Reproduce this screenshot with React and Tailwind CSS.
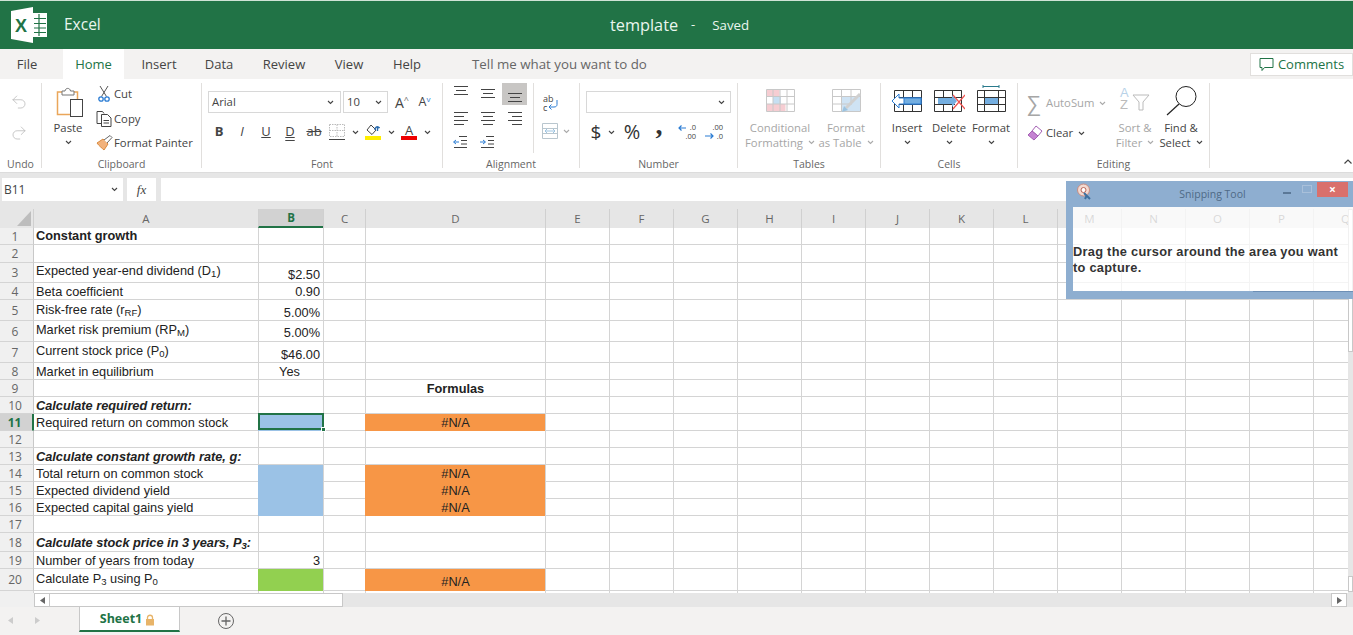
import { Fragment } from "react";
import { Undo2, Redo2 } from "lucide-react";

const Chevron = ({ color = "#444" }) => (
  <svg width="7" height="5" viewBox="0 0 7 5" fill="none" stroke={color} strokeWidth="1.1">
    <path d="M1 1L3.500 3.500L6 1" />
  </svg>
);

const ExcelLogo = () => (
  <svg width="38" height="38" viewBox="0 0 38 38">
    <path d="M1 5L23 1V37L1 33Z" fill="#fff" />
    <path d="M23 7H37V31H23Z" fill="#fff" />
    <path d="M24 12.5H36M24 17.5H36M24 22H36M24 26.5H36M29 8V30" stroke="#217346" strokeWidth="1.2" />
    <text x="5" y="26" fill="#217346" fontSize="18" fontWeight="700" fontFamily="Liberation Sans">X</text>
  </svg>
);

const PasteIcon = () => (
  <svg width="28" height="31" viewBox="0 0 28 31" fill="none">
    <path d="M7 5H1.5V27.5H14" stroke="#eaa65a" strokeWidth="1.5" />
    <path d="M16 5H21.5V12" stroke="#eaa65a" strokeWidth="1.5" />
    <path d="M6 8V4H9C9.5 0.5 14 0.5 14.500 4H18V8Z" fill="#fff" stroke="#777" />
    <rect x="14.500" y="12.500" width="12" height="17" fill="#fff" stroke="#444" />
  </svg>
);

const CutIcon = () => (
  <svg width="12" height="16" viewBox="0 0 12 16" fill="none">
    <path d="M2 0L8.500 10.500M10 0L3.500 10.500" stroke="#555" />
    <circle cx="3" cy="13" r="2.200" stroke="#2b7cd3" strokeWidth="1.300" />
    <circle cx="9" cy="13" r="2.200" stroke="#2b7cd3" strokeWidth="1.300" />
  </svg>
);

const CopyIcon = () => (
  <svg width="16" height="16" viewBox="0 0 16 16" fill="none" stroke="#444">
    <path d="M5.500 12.500H1V0.500H6.500L8 2.500" />
    <path d="M5.500 3.500H11.500L15 7V15.500H5.500Z" fill="#fff" />
    <path d="M7.500 9.500H13M7.500 12H13" />
  </svg>
);

const PainterIcon = () => (
  <svg width="17" height="16" viewBox="0 0 17 16" fill="none">
    <path d="M1 8L7 4L12 9L8 15C6 13 3 11 1 8Z" fill="#f2b27c" stroke="#d98a3e" />
    <path d="M8 5L14 0.500L16 2.500L11 8" fill="#fff" stroke="#666" />
  </svg>
);

const Borders = () => (
  <svg width="16" height="16" viewBox="0 0 16 16" fill="none">
    <path d="M0.500 0.500H15.500V12.500H0.500ZM8 0.500V12.500M0.500 6.500H15.500" stroke="#bbb" strokeDasharray="1.500 1" />
    <path d="M0 15.500H16" stroke="#444" />
  </svg>
);

const FillColor = () => (
  <div className="flex flex-col items-center">
    <svg width="14" height="12" viewBox="0 0 14 12" fill="none">
      <path d="M5 1L1 6L6 10.500L10 6Z" stroke="#444" />
      <path d="M9 6C9 3 11 2 13 3.500L11.500 4V7" stroke="#2b6cb0" strokeWidth="1.400" />
    </svg>
    <div className="w-[16px] h-[4px] bg-[#ffee00]" />
  </div>
);

const FontColor = () => (
  <div className="flex flex-col items-center leading-[13px]">
    <span className="text-[13px] h-[12px] text-[#444]">A</span>
    <div className="w-[16px] h-[4px] bg-[#ee0000]" />
  </div>
);

const AlignLines = ({ lines }) => (
  <svg width="16" height="20" viewBox="0 0 16 20" stroke="#444" strokeWidth="1">
    {lines.map((l, i) => (
      <path key={i} d={`M${l[0]} ${l[2]}.5H${l[1]}`} />
    ))}
  </svg>
);

const Indent = ({ flip }) => (
  <svg width="15" height="14" viewBox="0 0 15 14" fill="none">
    <path d="M6 1.500H14M8 5.500H14M8 9H14M1 12.500H14" stroke="#444" />
    {flip ? (
      <path d="M0 7H5M3 5L5.500 7L3 9" stroke="#2b7cd3" />
    ) : (
      <path d="M6 7H1M3 5L0.500 7L3 9" stroke="#2b7cd3" />
    )}
  </svg>
);

const WrapIcon = () => (
  <div className="relative w-[15px] h-[16px] text-[9px] leading-[9px] text-[#444]">
    <div>ab</div>
    <div>c</div>
    <svg className="absolute left-[4px] top-[6px]" width="11" height="11" viewBox="0 0 11 11" fill="none" stroke="#2b7cd3">
      <path d="M10 0V4.500C10 6 9 7 7 7H2M4.500 4.500L2 7L4.500 9.500" />
    </svg>
  </div>
);

const MergeIcon = () => (
  <svg width="16" height="16" viewBox="0 0 16 16" fill="none" stroke="#b9c6ce">
    <path d="M0.500 0.500H15.500V15.500H0.500ZM0.500 5.500H15.500M0.500 10.500H15.500" />
    <path d="M3 8H13M5 6L3 8L5 10M11 6L13 8L11 10" stroke="#9cc3e0" />
  </svg>
);

const IncDecimal = () => (
  <div className="relative w-[18px] h-[18px] text-[7.500px] leading-[9px] text-[#444]">
    <div className="text-right">.0</div>
    <div className="text-right">.00</div>
    <svg className="absolute left-0 top-0" width="8" height="9" viewBox="0 0 8 9" fill="none" stroke="#2b7cd3" strokeWidth="1.200">
      <path d="M8 5H1M3.500 2.500L1 5L3.500 7.500" />
    </svg>
  </div>
);

const DecDecimal = () => (
  <div className="relative w-[18px] h-[18px] text-[7.500px] leading-[9px] text-[#444]">
    <div className="text-right">.00</div>
    <div className="text-right">.0</div>
    <svg className="absolute left-0 top-[8px]" width="10" height="9" viewBox="0 0 10 9" fill="none" stroke="#2b7cd3" strokeWidth="1.200">
      <path d="M0 5H8M5.500 2.500L8 5L5.500 7.500" />
    </svg>
  </div>
);

const CondFormat = () => (
  <svg width="29" height="23" viewBox="0 0 29 23" fill="none">
    <rect x="0.500" y="0.500" width="13" height="7" fill="#f6cdd2" />
    <rect x="7" y="8" width="8" height="7" fill="#c6dff2" />
    <rect x="0.500" y="15" width="19" height="7" fill="#f6cdd2" />
    <path d="M0.500 0.500H28.500V22.500H0.500ZM0.500 7.500H28.500M0.500 15H28.500M7 0.500V22.500M14 0.500V22.500M21 0.500V22.500" stroke="#c8c8c8" />
  </svg>
);

const TableFormat = () => (
  <svg width="29" height="23" viewBox="0 0 29 23" fill="none">
    <rect x="9" y="8" width="19" height="14" fill="#cfe3f4" />
    <path d="M0.500 0.500H28.500V22.500H0.500ZM0.500 7.500H28.500M0.500 15H20M9.500 0.500V22.500M19 0.500V15" stroke="#c8c8c8" />
    <path d="M28 5L14 19" stroke="#d0d0d0" strokeWidth="3" />
    <path d="M12 17L16 21L10 23Z" fill="#9cc3e0" />
  </svg>
);

const InsertIcon = () => (
  <svg width="31" height="22" viewBox="0 0 31 22" fill="none">
    <path d="M3.500 0.500H30.500V21.500H3.500ZM3.500 7.500H30.500M3.500 14.500H30.500M12.500 0.500V21.500M21.500 0.500V21.500" stroke="#333" />
    <path d="M8 4L1 11L8 18V14H30V8H8Z" fill="#fff" stroke="#2b7cd3" />
    <rect x="13" y="8" width="17" height="6" fill="#74aee0" stroke="#2b7cd3" />
  </svg>
);

const DeleteIcon = () => (
  <svg width="31" height="22" viewBox="0 0 31 22" fill="none">
    <path d="M0.500 0.500H27.500V21.500H0.500ZM0.500 7.500H27.500M0.500 14.500H21M9.500 0.500V21.500M18.500 0.500V21.500M27.500 0.500V6" stroke="#333" />
    <path d="M4 8H18V5L23 11L18 17V14H4Z" fill="#74aee0" />
    <path d="M19 5L31 19M31 5L19 19" stroke="#ef5350" strokeWidth="1.200" />
  </svg>
);

const FormatIcon = () => (
  <svg width="29" height="27" viewBox="0 0 29 27" fill="none">
    <path d="M6 1.500H22M6 0V3M22 0V3" stroke="#2a7a8c" />
    <path d="M0.500 5.500H28.500V26.500H0.500ZM0.500 12.500H28.500M0.500 19.500H28.500M7.500 5.500V26.500M21.500 5.500V26.500" stroke="#333" />
    <rect x="8" y="13" width="13" height="6" fill="#74aee0" />
  </svg>
);

const Eraser = () => (
  <svg width="16" height="16" viewBox="0 0 16 16" fill="none">
    <path d="M9 1L15 6L11 11L5 6Z" fill="#fff" stroke="#a560b4" />
    <path d="M5 6L11 11L7 15L1 10Z" fill="#c583d2" stroke="#a560b4" />
  </svg>
);

const SortIcon = () => (
  <div className="relative w-[30px] h-[25px] text-[13px] leading-[12px] font-['Liberation_Sans',sans-serif]">
    <div className="text-[#b8d2e8]">A</div>
    <div className="text-[#bbb]">Z</div>
    <svg className="absolute left-[12px] top-[7px]" width="18" height="17" viewBox="0 0 18 17" fill="none" stroke="#bbb">
      <path d="M1 1H17L11 8V16H7V8Z" />
    </svg>
  </div>
);

const FindIcon = () => (
  <svg width="31" height="30" viewBox="0 0 31 30" fill="none" stroke="#222">
    <circle cx="20" cy="10.500" r="10" />
    <path d="M13 18L1 29" strokeWidth="1.200" />
  </svg>
);

const Triangle = () => (
  <svg width="14" height="15" viewBox="0 0 14 15">
    <path d="M14 0V15H0Z" fill="#bdbdbd" />
  </svg>
);

const SnipIcon = () => (
  <svg width="18" height="18" viewBox="0 0 18 18" fill="none">
    <circle cx="7.500" cy="7" r="6" fill="#f3d9d0" stroke="#c98c80" />
    <circle cx="7.500" cy="7" r="2.500" fill="#fff" stroke="#b8665a" />
    <path d="M8 10L14 16M11 12L9 16" stroke="#3c6f9f" strokeWidth="2" />
  </svg>
);

const Group = ({ label, width, children }) => (
  <div className={`${width} h-[85px] shrink-0 border-r border-[#e1dfdd]`}>
    <div className="h-[74px] flex">{children}</div>
    <div className="h-[14px] leading-[14px] text-[10.500px] text-center text-[#666]">{label}</div>
  </div>
);

const Big = ({ icon, lines, width, muted, chev, pt = "pb-[8px]" }) => (
  <div className={`${width} flex flex-col items-center shrink-0`}>
    <div className={`h-[37px] flex items-end justify-center ${pt}`}>{icon}</div>
    <div className={`text-[11.300px] leading-[15px] whitespace-nowrap ${muted ? "text-[#a6a6a6]" : "text-[#444]"}`}>{lines[0]}</div>
    {lines[1] ? (
      <div className={`text-[11.300px] leading-[15px] whitespace-nowrap flex items-center gap-[5px] ${muted ? "text-[#a6a6a6]" : "text-[#444]"}`}>
        {lines[1]}
        <Chevron color={muted ? "#aaa" : "#444"} />
      </div>
    ) : (
      chev && <div className="h-[15px] flex items-center"><Chevron /></div>
    )}
  </div>
);

const SmallRow = ({ icon, text, mt }) => (
  <div className={`h-[20px] flex items-center ${mt}`}>
    <div className="w-[20px] flex justify-center">{icon}</div>
    <span className="text-[11.300px] text-[#444] whitespace-nowrap">{text}</span>
  </div>
);

const Ribbon = () => (
  <div className="h-[93px] bg-white pt-[4px] flex">
    <Group label="Undo" width="w-[42px]">
      <div className="w-[38px] pt-[10px] flex flex-col items-center gap-[13px]">
        <Undo2 size={18} strokeWidth={1} color="#b5b5b5" />
        <Redo2 size={18} strokeWidth={1} color="#b5b5b5" />
      </div>
    </Group>

    <Group label="Clipboard" width="w-[160px]">
      <div className="w-[52px] pt-[4px] flex flex-col items-center">
        <div className="ml-[3px]"><PasteIcon /></div>
        <div className="text-[11.300px] leading-[15px] mt-[2px] text-[#444]">Paste</div>
        <div className="h-[15px] flex items-center"><Chevron /></div>
      </div>
      <div className="pt-[1px]">
        <SmallRow icon={<CutIcon />} text="Cut" />
        <SmallRow icon={<CopyIcon />} text="Copy" mt="mt-[5px]" />
        <SmallRow icon={<PainterIcon />} text="Format Painter" mt="mt-[4px]" />
      </div>
    </Group>

    <Group label="Font" width="w-[241px]">
      <div className="pl-[6px] pt-[8px]">
        <div className="flex items-center">
          <div className="w-[133px] h-[22px] border border-[#d8d8d8] flex items-center justify-between px-[3px] pr-[6px] text-[11.300px] text-[#444]">
            Arial <Chevron />
          </div>
          <div className="w-[45px] h-[22px] ml-[2px] border border-[#d8d8d8] flex items-center justify-between px-[3px] pr-[5px] text-[11.300px] text-[#444]">
            10 <Chevron />
          </div>
          <div className="w-[22px] ml-[3px] text-[14px] text-center text-[#444]">A<sup className="text-[9px] text-[#666]">^</sup></div>
          <div className="w-[23px] text-[12.500px] text-center text-[#444]">A<sup className="text-[8px] text-[#2b7cd3]">v</sup></div>
        </div>
        <div className="flex items-center h-[22px] mt-[8px] text-[#444] text-[13px]">
          <div className="w-[22px] text-center font-bold">B</div>
          <div className="w-[24px] text-center italic">I</div>
          <div className="w-[24px] text-center underline">U</div>
          <div className="w-[24px] text-center underline decoration-double">D</div>
          <div className="w-[24px] text-center line-through">ab</div>
          <div className="w-[19px] flex justify-end"><Borders /></div>
          <div className="w-[20px] flex justify-center"><Chevron /></div>
          <div className="w-[16px] flex justify-center"><FillColor /></div>
          <div className="w-[20px] flex justify-center"><Chevron /></div>
          <div className="w-[16px] flex justify-center"><FontColor /></div>
          <div className="w-[20px] flex justify-center"><Chevron /></div>
        </div>
      </div>
    </Group>

    <Group label="Alignment" width="w-[137px]">
      <div className="ml-[4px] grid grid-cols-[27px_27px_27px] grid-rows-[22px_22px_22px] gap-y-[2px] items-center justify-items-center">
        <AlignLines lines={[[1, 15, 2], [3, 13, 6], [1, 15, 10]]} />
        <AlignLines lines={[[1, 15, 5], [3, 13, 9], [1, 15, 13]]} />
        <div className="w-[25px] h-[22px] bg-[#c8c6c4] flex items-center justify-center">
          <AlignLines lines={[[1, 15, 9], [3, 13, 13], [1, 15, 17]]} />
        </div>
        <AlignLines lines={[[1, 15, 4], [1, 11, 8], [1, 15, 12], [1, 11, 16]]} />
        <AlignLines lines={[[1, 15, 4], [3, 13, 8], [1, 15, 12], [3, 13, 16]]} />
        <AlignLines lines={[[1, 15, 4], [5, 15, 8], [1, 15, 12], [5, 15, 16]]} />
        <Indent />
        <Indent flip />
      </div>
      <div className="ml-[5px] h-[70px] border-l border-[#e1dfdd] pl-[9px] pt-[11px]">
        <WrapIcon />
        <div className="flex items-center gap-[5px] mt-[13px] -ml-px">
          <MergeIcon />
          <Chevron color="#aaa" />
        </div>
      </div>
    </Group>

    <Group label="Number" width="w-[158px]">
      <div className="pl-[6px] pt-[8px]">
        <div className="w-[145px] h-[22px] border border-[#d8d8d8] flex items-center justify-end pr-[5px]"><Chevron /></div>
        <div className="flex items-center h-[22px] mt-[8px] text-[#333]">
          <div className="w-[20px] text-center text-[19px]">$</div>
          <div className="w-[10px] flex justify-center"><Chevron /></div>
          <div className="w-[32px] text-center text-[20px]">%</div>
          <div className="w-[22px] text-center text-[28px] font-bold leading-[14px] pb-[14px] font-['Liberation_Serif',serif]">,</div>
          <div className="ml-[8px] w-[18px]"><IncDecimal /></div>
          <div className="ml-[9px] w-[18px]"><DecDecimal /></div>
        </div>
      </div>
    </Group>

    <Group label="Tables" width="w-[143px]">
      <Big icon={<CondFormat />} lines={["Conditional", "Formatting"]} width="w-[84px]" muted />
      <Big icon={<TableFormat />} lines={["Format", "as Table"]} width="w-[48px]" muted />
    </Group>

    <Group label="Cells" width="w-[137px]">
      <div className="w-[5px]" />
      <Big icon={<div className="-ml-[2px]"><InsertIcon /></div>} lines={["Insert"]} width="w-[42px]" chev />
      <Big icon={<DeleteIcon />} lines={["Delete"]} width="w-[42px]" chev />
      <Big icon={<FormatIcon />} lines={["Format"]} width="w-[42px]" chev />
    </Group>

    <Group label="Editing" width="w-[192px]">
      <div className="w-[100px] pl-[9px] shrink-0">
        <div className="h-[20px] mt-[10px] flex items-center text-[11.300px] text-[#a6a6a6]">
          <span className="w-[19px] text-[21px] leading-[20px]">∑</span>
          AutoSum
          <span className="ml-[5px]"><Chevron color="#aaa" /></span>
        </div>
        <div className="h-[20px] mt-[10px] flex items-center text-[11.300px] text-[#444]">
          <span className="w-[19px]"><Eraser /></span>
          Clear
          <span className="ml-[5px]"><Chevron /></span>
        </div>
      </div>
      <Big icon={<SortIcon />} lines={["Sort &", "Filter"]} width="w-[34px]" muted />
      <Big icon={<FindIcon />} lines={["Find &", "Select"]} width="w-[58px]" pt="pb-[4px]" />
    </Group>

    <div className="flex-1 flex justify-end items-end pr-[1px] pb-[8px]">
      <svg width="8" height="5" viewBox="0 0 8 5" fill="none" stroke="#444" strokeWidth="1.200">
        <path d="M0.500 4.500L4 1L7.500 4.500" />
      </svg>
    </div>
  </div>
);

const columns = ["A", "B", "C", "D", "E", "F", "G", "H", "I", "J", "K", "L", "M", "N", "O", "P", "Q"];
const gridCols = "grid grid-cols-[33px_225px_65px_42px_180px_repeat(13,64px)]";

const rows = [
  { n: 1, h: "h-[17px]", a: <b>Constant growth</b>, ap: "pb-[1px]" },
  { n: 2, h: "h-[18px]" },
  { n: 3, h: "h-[20px]", a: <>Expected year-end dividend (D<sub>1</sub>)</>, ap: "pb-[4px]", b: "$2.50" },
  { n: 4, h: "h-[17px]", a: "Beta coefficient", b: "0.90" },
  { n: 5, h: "h-[21px]", a: <>Risk-free rate (r<sub>RF</sub>)</>, ap: "pb-[3px]", b: "5.00%" },
  { n: 6, h: "h-[21px]", a: <>Market risk premium (RP<sub>M</sub>)</>, ap: "pb-[4px]", b: "5.00%", bp: "pb-[1px]" },
  { n: 7, h: "h-[21px]", a: <>Current stock price (P<sub>0</sub>)</>, ap: "pb-[4px]", b: "$46.00" },
  { n: 8, h: "h-[17px]", a: "Market in equilibrium", b: "Yes", bc: "justify-center" },
  { n: 9, h: "h-[17px]", d: <b>Formulas</b> },
  { n: 10, h: "h-[17px]", a: <b><i>Calculate required return:</i></b> },
  { n: 11, h: "h-[17px]", a: "Required return on common stock", fill: "bg-[#9bc2e6]", d: "#N/A", selected: true },
  { n: 12, h: "h-[17px]" },
  { n: 13, h: "h-[17px]", a: <b><i>Calculate constant growth rate, g:</i></b> },
  { n: 14, h: "h-[17px]", a: "Total return on common stock", fill: "bg-[#9bc2e6]", d: "#N/A" },
  { n: 15, h: "h-[17px]", a: "Expected dividend yield", fill: "bg-[#9bc2e6]", d: "#N/A" },
  { n: 16, h: "h-[17px]", a: "Expected capital gains yield", fill: "bg-[#9bc2e6]", d: "#N/A" },
  { n: 17, h: "h-[17px]" },
  { n: 18, h: "h-[19px]", a: <b><i>Calculate stock price in 3 years, P<sub>3</sub>:</i></b>, ap: "pb-[1px]" },
  { n: 19, h: "h-[17px]", a: "Number of years from today", b: "3" },
  { n: 20, h: "h-[22px]", a: <>Calculate P<sub>3</sub> using P<sub>0</sub></>, ap: "pb-[4px]", fill: "bg-[#92d050]", d: "#N/A", dp: "pb-[1px]" },
];

const Grid = () => (
  <div className="flex-1 min-w-0 h-[384px] overflow-hidden">
    <div className={`${gridCols} h-[19px] bg-[#e6e6e6]`}>
      <div className="flex justify-end pr-[2px] pt-[2px]"><Triangle /></div>
      {columns.map((c) => (
        <div
          key={c}
          className={`flex items-center justify-center text-[11.500px] border-l border-[#d0d0d0] ${
            c === "B" ? "bg-[#d2d2d2] font-bold text-[#217346] border-b-2 border-b-[#217346]" : "text-[#666]"
          }`}
        >
          {c}
        </div>
      ))}
    </div>
    {rows.map((r) => (
      <div key={r.n} className={`${gridCols} ${r.h} text-[12.750px] leading-[15px] text-[#222] font-['Liberation_Sans',Arial,sans-serif]`}>
        <div
          className={`flex items-center justify-center pr-[3px] text-[12px] font-['Open_Sans',sans-serif] border-b border-[#d4d4d4] ${
            r.selected ? "bg-[#d2d2d2] font-bold text-[#217346] border-r border-r-[#217346]" : "bg-[#f0f0f0] text-[#666]"
          }`}
        >
          {r.n}
        </div>
        <div
          className={`flex items-end pl-[2px] whitespace-nowrap border-l border-b border-b-[#d4d4d4] ${r.ap || "pb-0"} ${
            r.selected ? "border-l-[#217346]" : "border-l-[#c8c8c8]"
          }`}
        >
          <span>{r.a}</span>
        </div>
        <div
          className={`relative flex items-end pr-[3px] border-l border-b ${r.bc || "justify-end"} ${r.bp || "pb-0"} ${
            r.fill ? `${r.fill} border-transparent` : "border-[#d4d4d4]"
          }`}
        >
          {r.b}
          {r.selected && (
            <Fragment>
              <div className="absolute inset-0 -top-px -right-px -left-px border-2 border-[#217346]" />
              <div className="absolute -right-[3px] -bottom-[2px] w-[5px] h-[5px] bg-[#217346] border border-white" />
            </Fragment>
          )}
        </div>
        <div className="border-l border-b border-[#d4d4d4]" />
        <div
          className={`flex items-end justify-center border-l border-b ${r.dp || "pb-0"} ${
            r.d === "#N/A" ? "bg-[#f79646] border-transparent" : "border-[#d4d4d4]"
          }`}
        >
          {r.d}
        </div>
        {columns.slice(4).map((c) => (
          <div key={c} className="border-l border-b border-[#d4d4d4]" />
        ))}
      </div>
    ))}
    <div className={`${gridCols} h-[2px]`}>
      <div className="bg-[#f0f0f0]" />
      {columns.map((c) => (
        <div key={c} className="border-l border-[#d4d4d4]" />
      ))}
    </div>
  </div>
);

const tabs = [
  { label: "File", w: "w-[54px] mr-[9px]" },
  { label: "Home", w: "w-[61px]", active: true },
  { label: "Insert", w: "w-[70px]" },
  { label: "Data", w: "w-[50px]" },
  { label: "Review", w: "w-[80px]" },
  { label: "View", w: "w-[50px]" },
  { label: "Help", w: "w-[66px]" },
];

export default function App() {
  return (
    <div className="relative w-full h-[635px] overflow-hidden bg-[#f3f2f1] font-['Open_Sans',sans-serif]">
      {/* title bar */}
      <div className="h-[49px] bg-[#217346] border-t border-[#cfe3d6] flex items-center text-[#eaf6ee]">
        <div className="w-[64px] pl-[10px]"><ExcelLogo /></div>
        <span className="w-[100px] text-[15.500px]">Excel</span>
        <span className="ml-[446px] text-[16.300px]">template</span>
        <span className="ml-[13px] text-[13px]">-</span>
        <span className="ml-[17px] mt-[2px] text-[13.300px]">Saved</span>
      </div>

      {/* tabs */}
      <div className="h-[30px] flex items-stretch text-[13px] text-[#444]">
        {tabs.map((t) => (
          <div
            key={t.label}
            className={`${t.w} flex items-center justify-center pt-[2px] ${t.active ? "bg-white text-[#217346]" : ""}`}
          >
            {t.label}
          </div>
        ))}
        <div className="ml-[32px] pt-[2px] flex items-center text-[13.300px] text-[#666]">Tell me what you want to do</div>
        <div className="ml-auto mt-[4px] mb-[3px] w-[103px] bg-white border border-[#e1dfdd] flex items-center justify-center gap-[4px] text-[#217346] font-medium">
          <svg width="15" height="15" viewBox="0 0 15 15" fill="none" stroke="#217346">
            <path d="M1 1.500H14V10.500H5.500L3 13.500V10.500H1Z" />
          </svg>
          Comments
        </div>
      </div>

      <Ribbon />

      {/* formula bar */}
      <div className="h-[28px] pt-[5px] bg-[#e6e6e6] border-t border-[#dcdcdc] flex">
        <div className="ml-[2px] w-[121px] h-[23px] bg-white flex items-center justify-between pl-[2px] pr-[5px] text-[12px] text-[#444]">
          B11 <Chevron />
        </div>
        <div className="ml-[4px] w-[29px] h-[23px] bg-white flex items-center justify-center italic text-[13px] text-[#444] font-['Liberation_Serif',serif]">
          fx
        </div>
        <div className="ml-[5px] flex-1 h-[23px] bg-white" />
      </div>
      <div className="h-[9px] bg-[#e6e6e6]" />

      {/* sheet */}
      <div className="flex bg-white">
        <Grid />
        <div className="w-[5px] shrink-0 h-[384px] bg-[#e6e6e6] flex flex-col justify-between">
          <div className="h-[143px] bg-white border border-[#c8c8c8]" />
          <div className="h-[16px] mb-[1px] bg-white border border-[#c8c8c8]" />
        </div>
      </div>

      {/* horizontal scrollbar */}
      <div className="h-[14px] flex bg-[#e6e6e6]">
        <div className="w-[34px] bg-[#f0f0f0]" />
        <div className="w-[16px] bg-white border border-[#c8c8c8] flex items-center justify-center">
          <svg width="5" height="7" viewBox="0 0 5 7"><path d="M5 0V7L0 3.500Z" fill="#666" /></svg>
        </div>
        <div className="w-[293px] bg-white border border-l-0 border-[#c8c8c8]" />
        <div className="ml-auto mr-[6px] w-[16px] bg-white border border-[#c8c8c8] flex items-center justify-center">
          <svg width="5" height="7" viewBox="0 0 5 7"><path d="M0 0V7L5 3.500Z" fill="#666" /></svg>
        </div>
      </div>

      {/* sheet tabs */}
      <div className="h-[28px] flex">
        <div className="w-[79px] flex items-center pl-[8px] gap-[22px] pb-[2px]">
          <svg width="5" height="7" viewBox="0 0 5 7"><path d="M5 0V7L0 3.500Z" fill="#ccc" /></svg>
          <svg width="5" height="7" viewBox="0 0 5 7"><path d="M0 0V7L5 3.500Z" fill="#ccc" /></svg>
        </div>
        <div className="w-[101px] h-[25px] bg-white border-x border-[#c8c8c8] border-b-2 border-b-[#217346] flex items-center justify-center gap-[3px] pt-[2px] pr-[4px] text-[12.500px] font-bold text-[#217346]">
          Sheet1
          <svg width="10" height="12" viewBox="0 0 10 12" fill="none">
            <path d="M2.500 5V3.500C2.500 0.500 7.500 0.500 7.500 3.500V5" stroke="#e8b469" strokeWidth="1.300" />
            <rect x="1" y="5" width="8" height="6.500" fill="#e8b469" />
          </svg>
        </div>
        <div className="ml-[38px] pt-[6px]">
          <svg width="16" height="16" viewBox="0 0 16 16" fill="none" stroke="#666">
            <circle cx="8" cy="8" r="7.500" />
            <path d="M8 3.500V12.500M3.500 8H12.500" strokeWidth="1.300" />
          </svg>
        </div>
      </div>

      {/* snipping tool window floating over the sheet */}
      <div className="absolute left-[1066px] top-[181px] w-[287px] h-[118px] flex flex-col">
        <div className="h-[26px] shrink-0 relative bg-[#8eaed0] flex items-center justify-center text-[10.500px] text-[#4f6a86]">
          <div className="absolute left-[10px] top-[2px]"><SnipIcon /></div>
          <span className="ml-[6px] mt-[1px]">Snipping Tool</span>
          <div className="absolute left-[217px] top-[11px] w-[8px] h-[2px] bg-[#5b7897]" />
          <div className="absolute left-[236px] top-[4px] w-[10px] h-[8px] border border-[#a9c0da]" />
          <div className="absolute left-[251px] top-[1px] w-[31px] h-[15px] bg-[#d9706c] flex items-center justify-center text-white text-[12px] font-bold">
            ×
          </div>
        </div>
        <div className="flex h-[84px] shrink-0">
          <div className="w-[7px] bg-[#8eaed0]" />
          <div className="flex-1 bg-white/75 pt-[37px] text-[12.800px] leading-[16px] font-bold tracking-[0.28px] whitespace-nowrap text-[#333] font-['Liberation_Sans',Arial,sans-serif]">
            Drag the cursor around the area you want
            <br />
            to capture.
          </div>
        </div>
        <div className="flex-1 bg-[#8eaed0] flex justify-end items-start">
          <div className="w-[100px] h-px bg-[#6d8fb5]" />
        </div>
      </div>
    </div>
  );
}
